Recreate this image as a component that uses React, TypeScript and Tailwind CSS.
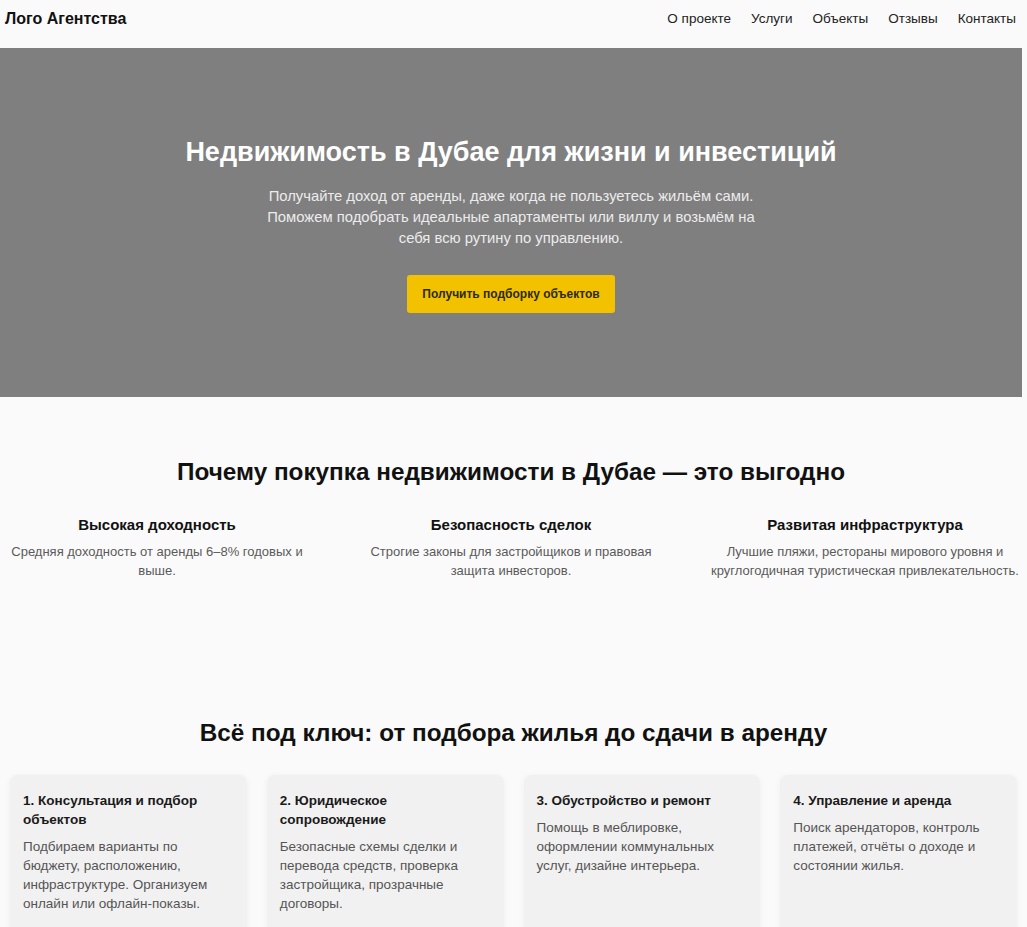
import React from "react";

const font = { fontFamily: '"Liberation Sans", Arial, sans-serif' };

const benefits = [
  {
    title: "Высокая доходность",
    text: "Средняя доходность от аренды 6–8% годовых и выше.",
  },
  {
    title: "Безопасность сделок",
    text: "Строгие законы для застройщиков и правовая защита инвесторов.",
  },
  {
    title: "Развитая инфраструктура",
    text: "Лучшие пляжи, рестораны мирового уровня и круглогодичная туристическая привлекательность.",
  },
];

const steps = [
  {
    title: "1. Консультация и подбор объектов",
    text: "Подбираем варианты по бюджету, расположению, инфраструктуре. Организуем онлайн или офлайн-показы.",
  },
  {
    title: "2. Юридическое сопровождение",
    text: "Безопасные схемы сделки и перевода средств, проверка застройщика, прозрачные договоры.",
  },
  {
    title: "3. Обустройство и ремонт",
    text: "Помощь в меблировке, оформлении коммунальных услуг, дизайне интерьера.",
  },
  {
    title: "4. Управление и аренда",
    text: "Поиск арендаторов, контроль платежей, отчёты о доходе и состоянии жилья.",
  },
];

export default function App() {
  return (
    <div className="min-h-[927px] w-full bg-[#fafafa]" style={font}>
      <div className="w-[1022px] text-[#1a1a1a]">
        <header className="flex h-[48px] items-start justify-between bg-[#fafafa] pl-[5px] pr-[6px] pt-[8px]">
          <div className="text-[16px] font-bold leading-[22px] text-[#111]">Лого Агентства</div>
          <nav className="flex gap-[20px] text-[13.5px] leading-[22px] text-[#222]">
            <a>О проекте</a>
            <a>Услуги</a>
            <a>Объекты</a>
            <a>Отзывы</a>
            <a>Контакты</a>
          </nav>
        </header>

        <section className="flex h-[349px] flex-col items-center bg-[#7f7f7f] pt-[87px] text-center">
          <h1 className="text-[27px] font-bold leading-[34px] text-white">
            Недвижимость в Дубае для жизни и инвестиций
          </h1>
          <p className="mt-[17px] max-w-[500px] text-[14.8px] leading-[21px] text-[#ececec]">
            Получайте доход от аренды, даже когда не пользуетесь жильём сами. Поможем подобрать идеальные
            апартаменты или виллу и возьмём на себя всю рутину по управлению.
          </p>
          <button className="mt-[26px] flex h-[38px] w-[208px] items-center justify-center rounded-[3px] bg-[#f2c200] text-[12px] font-bold text-[#2e2a10]">
            Получить подборку объектов
          </button>
        </section>

        <section className="pt-[60px] pb-[60px]">
          <h2 className="text-center text-[24.3px] font-bold leading-[29px] text-[#111]">
            Почему покупка недвижимости в Дубае — это выгодно
          </h2>
          <div className="mt-[28px] grid grid-cols-3 gap-[40px]">
            {benefits.map((b) => (
              <div key={b.title} className="text-center">
                <h3 className="text-[15px] font-bold leading-[22px] text-[#111]">{b.title}</h3>
                <p className="mt-[6px] text-[13px] leading-[19px] text-[#5a5a5a]">{b.text}</p>
              </div>
            ))}
          </div>
        </section>

        <section className="pl-[10px] pr-[5px] pt-[78px]">
          <h2 className="text-center text-[24.3px] font-bold leading-[29px] text-[#111]">
            Всё под ключ: от подбора жилья до сдачи в аренду
          </h2>
          <div className="mt-[28px] grid grid-cols-4 gap-[20px]">
            {steps.map((s) => (
              <div
                key={s.title}
                className="h-[200px] rounded-[8px] bg-[#f1f1f1] px-[13px] pt-[16px] shadow-[0_1px_6px_rgba(0,0,0,0.05)]"
              >
                <h3 className="text-[13.5px] font-bold leading-[19px] text-[#1a1a1a]">{s.title}</h3>
                <p className="mt-[8px] text-[13.5px] leading-[19px] text-[#555]">{s.text}</p>
              </div>
            ))}
          </div>
        </section>
      </div>
    </div>
  );
}
